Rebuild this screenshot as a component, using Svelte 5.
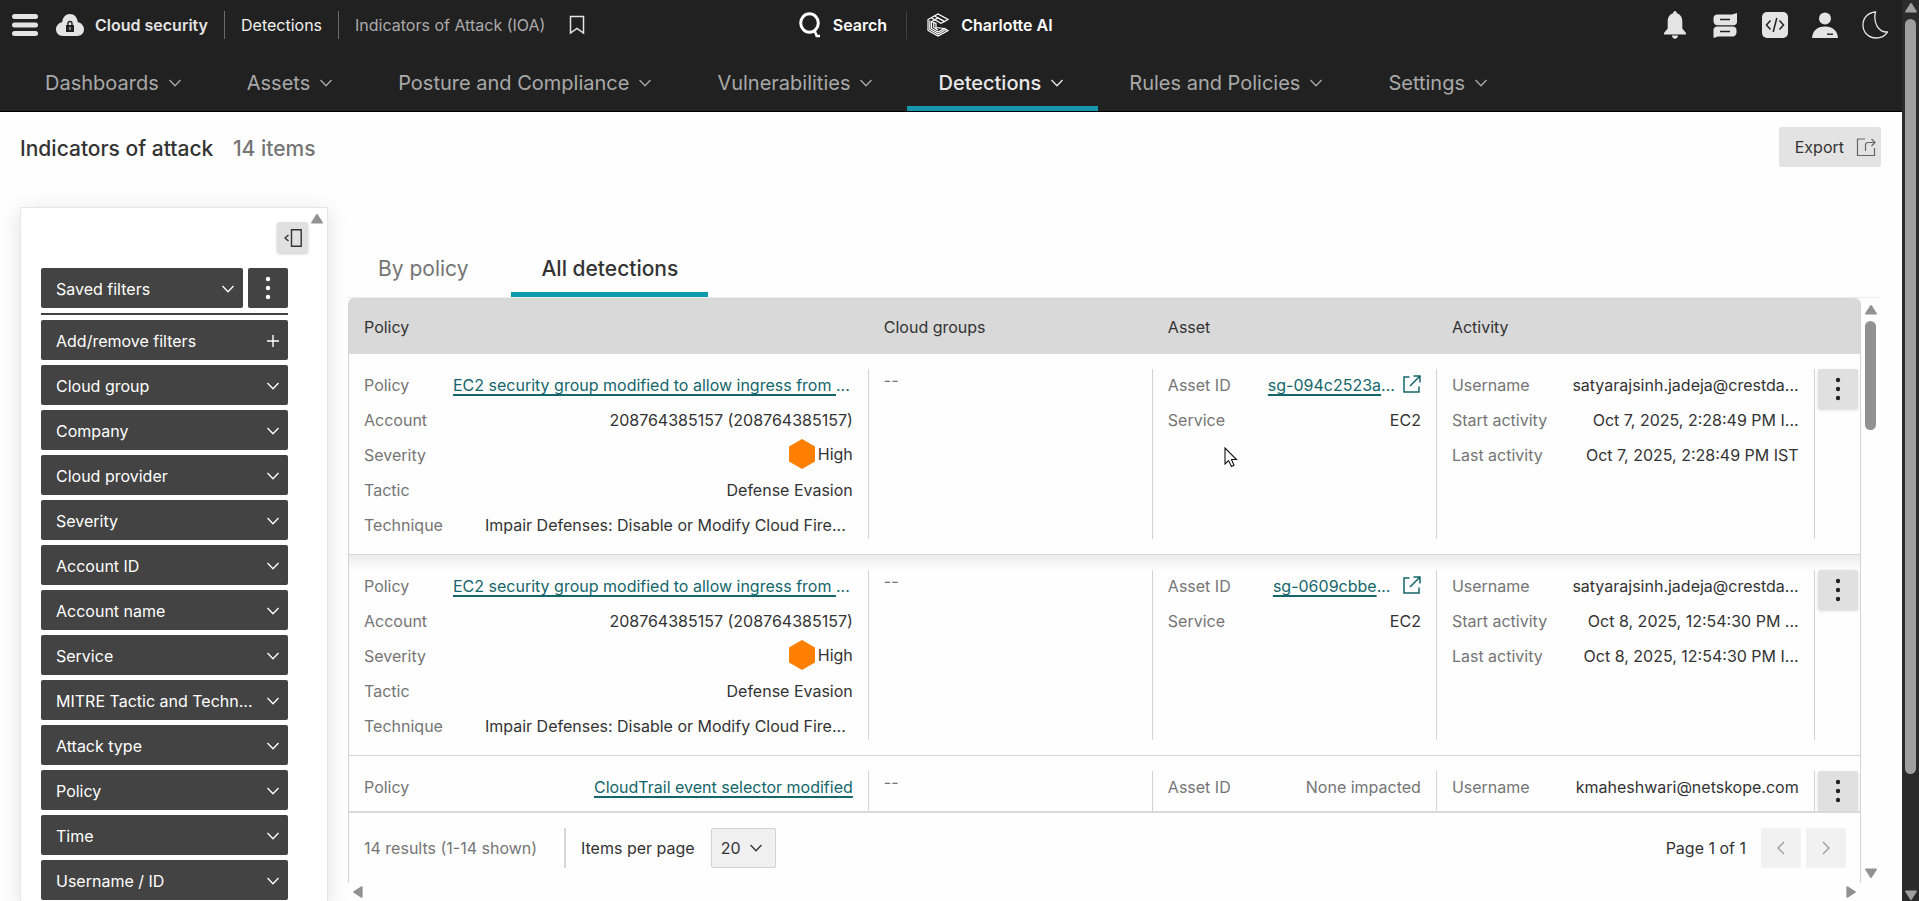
<script>
  const navItems = [
    'Dashboards',
    'Assets',
    'Posture and Compliance',
    'Vulnerabilities',
    'Detections',
    'Rules and Policies',
    'Settings'
  ];

  const filters = [
    'Cloud group',
    'Company',
    'Cloud provider',
    'Severity',
    'Account ID',
    'Account name',
    'Service',
    'MITRE Tactic and Techn...',
    'Attack type',
    'Policy',
    'Time',
    'Username / ID'
  ];

  const detections = [
    {
      policy: 'EC2 security group modified to allow ingress from ',
      cut: true,
      account: '208764385157 (208764385157)',
      severity: 'High',
      tactic: 'Defense Evasion',
      technique: 'Impair Defenses: Disable or Modify Cloud Fire...',
      assetId: 'sg-094c2523a',
      service: 'EC2',
      username: 'satyarajsinh.jadeja@crestda...',
      start: 'Oct 7, 2025, 2:28:49 PM I...',
      last: 'Oct 7, 2025, 2:28:49 PM IST'
    },
    {
      policy: 'EC2 security group modified to allow ingress from ',
      cut: true,
      account: '208764385157 (208764385157)',
      severity: 'High',
      tactic: 'Defense Evasion',
      technique: 'Impair Defenses: Disable or Modify Cloud Fire...',
      assetId: 'sg-0609cbbe',
      service: 'EC2',
      username: 'satyarajsinh.jadeja@crestda...',
      start: 'Oct 8, 2025, 12:54:30 PM ...',
      last: 'Oct 8, 2025, 12:54:30 PM I...'
    },
    {
      policy: 'CloudTrail event selector modified',
      username: 'kmaheshwari@netskope.com'
    }
  ];

  let activeNav = 'Detections';
  let activeTab = 'All detections';
  let hovered = 0;
  let pageSize = '20';
</script>

{#snippet chevron()}
  <svg class="chevron" width="12" height="8" viewBox="0 0 12 8" fill="none" stroke="currentColor" stroke-width="1.3" aria-hidden="true">
    <path d="M.5 1L6 6.800 11.500 1" />
  </svg>
{/snippet}

{#snippet kebab()}
  <svg width="6" height="24" viewBox="0 0 6 24" fill="currentColor" aria-hidden="true">
    <circle cx="3" cy="3" r="2.2" />
    <circle cx="3" cy="12" r="2.2" />
    <circle cx="3" cy="21" r="2.2" />
  </svg>
{/snippet}

{#snippet arrow(dir)}
  <svg class="arrow {dir}" width="12" height="12" viewBox="0 0 12 12" fill="currentColor" aria-hidden="true">
    <path d="M5.2 1.6Q6 .6 6.8 1.6L11.6 9q.8 1.6-.8 1.6H1.2Q-.4 10.6.4 9z" />
  </svg>
{/snippet}

<div class="app">
  <div class="page">
    <header>
      <div class="topbar">
        <div class="crumbs">
          <button class="icon-btn menu" aria-label="Menu">
            <svg width="26" height="24" viewBox="0 0 26 24" fill="currentColor">
              <rect y="1" width="26" height="5" rx="2.5" />
              <rect y="9.5" width="26" height="5" rx="2.5" />
              <rect y="18" width="26" height="5" rx="2.5" />
            </svg>
          </button>
          <svg width="28" height="24" viewBox="0 0 28 24" fill="#e4e4e4" aria-hidden="true">
            <path d="M14 1c-4.200 0-7.500 3.300-7.700 8C2.600 10 0 12.700 0 16.300 0 20.300 3 23 6.800 23h14.400c3.800 0 6.800-2.700 6.800-6.700 0-3.600-2.600-6.300-6.300-7.300C21.500 4.300 18.200 1 14 1z" />
            <path d="M10 12h8v7h-8z" fill="#212121" />
            <path d="M12 12.500v-2a2 2 0 0 1 4 0v2" fill="none" stroke="#212121" stroke-width="1.400" />
            <path d="M14 14v3" stroke="#e4e4e4" stroke-width="1" />
          </svg>
          <strong>Cloud security</strong>
          <span class="sep"></span>
          <a class="crumb" href="#detections">Detections</a>
          <span class="sep"></span>
          <span class="crumb-current">Indicators of Attack (IOA)</span>
          <button class="icon-btn" aria-label="Bookmark">
            <svg width="16" height="20" viewBox="0 0 16 20" fill="none" stroke="currentColor" stroke-width="1.500">
              <path d="M1.500 1.500h13v16.500L8 13.500 1.500 18z" />
            </svg>
          </button>
        </div>
        <div class="center-tools">
          <button class="tool">
            <svg width="22" height="26" viewBox="0 0 22 26" fill="none" stroke="currentColor" stroke-width="3" aria-hidden="true">
              <ellipse cx="10.500" cy="11" rx="8.800" ry="9.300" />
              <path d="M15.500 18.500l2.200 5.500H21" stroke-width="2.500" />
            </svg>
            Search
          </button>
          <span class="sep dim"></span>
          <button class="tool">
            <svg width="22" height="24" viewBox="0 0 22 24" fill="none" stroke="currentColor" stroke-width="1.200" aria-hidden="true">
              <path d="M1 6.500L11 1l10 5.500-3.500 2L11 5 4.500 8.500v7L11 19l6.500-3.500 3.500 2L11 23 1 17.500z" />
              <path d="M4.300 4.700l9.700 5.500 3.500-1.700M7.600 2.900l9.900 5.600M2.800 7.500v9L11 21l8-4.500M4.500 8.500L9 10.500v4l8.500 1M6.800 9.500v5l4.200 2.500" />
            </svg>
            Charlotte AI
          </button>
        </div>
        <div class="user-tools">
          <button class="icon-btn" aria-label="Notifications">
            <svg width="26" height="28" viewBox="-1 0 26 28" fill="currentColor">
              <path d="M12 0c1 0 1.700 1 1.900 2.200 3.300 1 5.400 4 5.400 7.800v7.500L23 22v1.500H1V22l3.700-4.500V10c0-3.800 2.100-6.800 5.400-7.800C10.300 1 11 0 12 0zM9 24.500h6c0 2-1.200 3.200-3 3.200s-3-1.200-3-3.200z" />
            </svg>
          </button>
          <button class="icon-btn" aria-label="Messages">
            <svg width="26" height="28" viewBox="-1 0 26 28">
              <path d="M4.500 3.500H19L24 2v9c0 2-1.500 3.200-3.500 3.200h-16C2 14.200.500 12.500.500 10V7.500c0-2.500 1.500-4 4-4z" fill="currentColor" />
              <path d="M4.500 15.500h15c2.500 0 4 1.500 4 3.500v2.500c0 2.300-1.500 4-4 4H5L.500 27V19c0-2 1.500-3.500 4-3.500z" fill="currentColor" />
              <path d="M7 8.500h10M7 20.500h10" stroke="#212121" stroke-width="1.600" />
            </svg>
          </button>
          <button class="icon-btn" aria-label="API">
            <svg width="26" height="28" viewBox="0 0 26 28">
              <rect y="1" width="26" height="26" rx="5" fill="currentColor" />
              <path d="M8.500 9.500L4.500 14l4 4.500M17.500 9.500l4 4.500-4 4.500M14.800 7l-3.600 14" fill="none" stroke="#212121" stroke-width="1.500" />
            </svg>
          </button>
          <button class="icon-btn" aria-label="Account">
            <svg width="26" height="28" viewBox="0 0 26 28" fill="currentColor">
              <ellipse cx="13" cy="7.500" rx="6" ry="6" />
              <path d="M0 27c.5-7 5-11.500 13-11.500S25.500 20 26 27z" />
              <path d="M15 23.200h6" stroke="#212121" stroke-width="1.400" />
            </svg>
          </button>
          <button class="icon-btn" aria-label="Dark mode">
            <svg width="26" height="28" viewBox="0 0 26 28" fill="none" stroke="currentColor" stroke-width="1.300">
              <path d="M13.500 1C6 1.500 1 7 1 14c0 7.500 5.500 13 13 13 5 0 9-2 11.500-6-9 .5-14.500-9-12-20z" />
            </svg>
          </button>
        </div>
      </div>
      <nav>
        {#each navItems as item}
          <button class="nav-item" class:active={item === activeNav} on:click={() => (activeNav = item)}>
            {item}
            {@render chevron()}
          </button>
        {/each}
      </nav>
    </header>

    <div class="title-row">
      <h1>Indicators of attack <span>14 items</span></h1>
      <button class="export">
        Export
        <svg width="20" height="20" viewBox="0 0 20 20" fill="none" stroke="currentColor" stroke-width="1.200" aria-hidden="true">
          <path d="M9 2H1.500v16.500h17V11M9.500 14V8c0-1.500.8-2.500 2.500-2.500h7M15.500 2l3.500 3.500L15.500 9" />
        </svg>
      </button>
    </div>

    <main>
      <aside>
        <div class="filters">
          <button class="collapse" aria-label="Collapse filters">
            <svg width="18" height="18" viewBox="0 0 18 18" fill="none" stroke="currentColor" stroke-width="1.400">
              <path d="M7.500.800h9.700v16.400H7.500zM4.500 6L1 9l3.500 3" />
            </svg>
          </button>
          <div class="saved">
            <button class="filter">Saved filters {@render chevron()}</button>
            <button class="filter more" aria-label="Saved filter actions">{@render kebab()}</button>
          </div>
          <hr />
          <button class="filter">
            Add/remove filters
            <svg width="12" height="12" viewBox="0 0 12 12" stroke="currentColor" stroke-width="1.400" aria-hidden="true">
              <path d="M6 0v12M0 6h12" />
            </svg>
          </button>
          {#each filters as filter}
            <button class="filter">{filter} {@render chevron()}</button>
          {/each}
        </div>
        <div class="aside-scroll">{@render arrow('up')}</div>
      </aside>

      <section class="content">
        <div class="tabs" role="tablist">
          {#each ['By policy', 'All detections'] as tab}
            <button
              class="tab"
              class:active={tab === activeTab}
              role="tab"
              aria-selected={tab === activeTab}
              on:click={() => (activeTab = tab)}
            >
              {tab}
            </button>
          {/each}
        </div>

        <div class="scroller">
          <div class="panel">
            <div class="rows">
              <table>
                <colgroup>
                  <col class="col-policy" />
                  <col class="col-group" />
                  <col class="col-group" />
                  <col class="col-activity" />
                  <col />
                </colgroup>
                <thead>
                  <tr>
                    <th>Policy</th>
                    <th>Cloud groups</th>
                    <th>Asset</th>
                    <th>Activity</th>
                    <th aria-label="Actions"></th>
                  </tr>
                </thead>
                <tbody>
                  {#each detections as d, i}
                    <tr class:hovered={i === hovered}>
                      <td>
                        <dl>
                          <div>
                            <dt>Policy</dt>
                            <dd class:cut={d.cut}><a href="#policy">{d.policy}</a>{#if d.cut}...{/if}</dd>
                          </div>
                          {#if d.account}
                            <div><dt>Account</dt><dd>{d.account}</dd></div>
                            <div>
                              <dt>Severity</dt>
                              <dd class="severity">
                                <svg width="26" height="30" viewBox="0 0 26 30" fill="#ff8000" aria-hidden="true">
                                  <path d="M13 0l13 7.500v15L13 30 0 22.500v-15z" />
                                </svg>
                                {d.severity}
                              </dd>
                            </div>
                            <div><dt>Tactic</dt><dd>{d.tactic}</dd></div>
                            <div><dt>Technique</dt><dd class="clipped">{d.technique}</dd></div>
                          {/if}
                        </dl>
                      </td>
                      <td><div class="empty">--</div></td>
                      <td>
                        <dl>
                          <div>
                            <dt>Asset ID</dt>
                            {#if d.assetId}
                              <dd class="asset">
                                <span><a href="#asset">{d.assetId}</a>...</span>
                                <svg width="18" height="18" viewBox="0 0 18 18" fill="none" stroke="currentColor" stroke-width="1.500" aria-hidden="true">
                                  <path d="M6.500 2H1v15h15v-5.500M7 11L16.500 1.500M10.500 1H17v6.500" />
                                </svg>
                              </dd>
                            {:else}
                              <dd class="muted">None impacted</dd>
                            {/if}
                          </div>
                          {#if d.service}
                            <div><dt>Service</dt><dd>{d.service}</dd></div>
                          {/if}
                        </dl>
                      </td>
                      <td>
                        <dl>
                          <div><dt>Username</dt><dd>{d.username}</dd></div>
                          {#if d.start}
                            <div><dt>Start activity</dt><dd>{d.start}</dd></div>
                            <div><dt>Last activity</dt><dd>{d.last}</dd></div>
                          {/if}
                        </dl>
                      </td>
                      <td class="actions">
                        <button class="row-menu" aria-label="Row actions">{@render kebab()}</button>
                      </td>
                    </tr>
                  {/each}
                </tbody>
              </table>
            </div>
            <footer>
              <span class="results">14 results (1-14 shown)</span>
              <label for="page-size">Items per page</label>
              <div class="select">
                <select id="page-size" bind:value={pageSize}>
                  <option>20</option>
                  <option>50</option>
                  <option>100</option>
                </select>
                {@render chevron()}
              </div>
              <span class="page-count">Page 1 of 1</span>
              <button class="pager" aria-label="Previous page" disabled>
                <svg width="8" height="14" viewBox="0 0 8 14" fill="none" stroke="currentColor" stroke-width="1.300"><path d="M7 1L1 7l6 6" /></svg>
              </button>
              <button class="pager" aria-label="Next page" disabled>
                <svg width="8" height="14" viewBox="0 0 8 14" fill="none" stroke="currentColor" stroke-width="1.300"><path d="M1 1l6 6-6 6" /></svg>
              </button>
            </footer>
          </div>
          <div class="v-scroll">
            {@render arrow('up')}
            <span class="thumb"></span>
            {@render arrow('down')}
          </div>
          <div class="h-scroll">
            {@render arrow('left')}
            {@render arrow('right')}
          </div>
        </div>
      </section>
    </main>
  </div>

  <div class="page-scroll">
    {@render arrow('up')}
    <span class="thumb"></span>
    {@render arrow('down')}
  </div>

  <svg class="cursor" width="14" height="21" viewBox="0 0 14 21" fill="#fff" stroke="#111" stroke-width="1.100" aria-hidden="true">
    <path d="M1 1v16l3.600-3.400L7.500 19.500l2.500-1.200L7.500 12.500H12.500z" />
  </svg>
</div>

<style>
  :global(body) {
    overflow: hidden;
  }

  .app {
    display: flex;
    height: 100vh;
    overflow: hidden;
    background: #fefefe;
    color: #333;
    font-family: Inter, 'Liberation Sans', sans-serif;
    font-size: 16px;
    line-height: 20px;
  }

  .page {
    flex: 1;
    min-width: 0;
    display: flex;
    flex-direction: column;
  }

  button {
    font: inherit;
    color: inherit;
    border: 0;
    padding: 0;
    background: none;
    cursor: pointer;
    white-space: nowrap;
  }

  svg {
    display: block;
    flex: none;
  }

  /* Header */
  header {
    background: #212121;
    border-bottom: 1px solid #000;
    color: #e4e4e4;
  }

  .topbar {
    display: grid;
    grid-template-columns: 42% 1fr auto;
    align-items: center;
    height: 49px;
  }

  .crumbs,
  .center-tools,
  .user-tools,
  .tool {
    display: flex;
    align-items: center;
    white-space: nowrap;
  }

  .crumbs {
    padding-left: 12px;
  }

  .menu {
    margin-right: 18px;
  }

  strong {
    margin-left: 11px;
    font-weight: 600;
  }

  .sep {
    width: 1px;
    height: 28px;
    margin: 0 16px;
    background: #6a6a6a;
  }

  .sep.dim {
    margin: 0 20px 0 19px;
    background: #404040;
  }

  .crumb {
    color: #f0f0f0;
    text-decoration: none;
  }

  .crumb-current {
    margin-right: 24px;
    color: #ababab;
  }

  .tool {
    gap: 12px;
    color: #fff;
    font-weight: 600;
  }

  .user-tools {
    gap: 24px;
    padding-right: 14px;
  }

  nav {
    display: flex;
    height: 62px;
    padding-left: 14px;
  }

  .nav-item {
    display: flex;
    align-items: center;
    gap: 10px;
    padding: 10px 35px 0 31px;
    color: #a9a9a9;
    font-size: 20px;
    border-bottom: 5px solid transparent;
  }

  .nav-item.active {
    color: #e8e8e8;
    font-weight: 500;
    border-color: #1797ae;
  }

  /* Title */
  .title-row {
    display: flex;
    align-items: center;
    justify-content: space-between;
    padding: 15px 21px 40px 20px;
  }

  h1 {
    margin: 0;
    padding-top: 3px;
    font-size: 21px;
    line-height: 24px;
    font-weight: 500;
  }

  h1 span {
    margin-left: 14px;
    color: #757575;
  }

  .export {
    display: flex;
    align-items: center;
    gap: 12px;
    height: 40px;
    padding: 0 5px 0 16px;
    background: #e3e3e3;
    border-radius: 2px;
  }

  .export svg {
    color: #666;
  }

  main {
    flex: 1;
    min-height: 0;
    display: flex;
    gap: 20px;
    padding-left: 20px;
  }

  /* Filters */
  aside {
    display: flex;
    width: 308px;
    box-sizing: border-box;
    flex: none;
    background: #fff;
    border: 1px solid #e6e6e6;
    border-bottom: 0;
    box-shadow: 0 4px 20px rgba(0, 0, 0, 0.12);
  }

  .filters {
    flex: 1;
    min-width: 0;
    display: flex;
    flex-direction: column;
    gap: 5px;
    padding: 14px 0 0 20px;
  }

  .collapse {
    display: grid;
    place-items: center;
    align-self: flex-end;
    width: 31px;
    height: 31px;
    margin: 0 -20px 10px 0;
    background: #e0e0e0;
    border-radius: 3px;
    box-shadow: 0 1px 3px rgba(0, 0, 0, 0.2);
  }

  .saved {
    display: flex;
    gap: 5px;
  }

  .saved .filter {
    flex: 1;
  }

  .saved .more {
    flex: 0 0 40px;
    justify-content: center;
    padding: 0;
  }

  hr {
    width: 100%;
    height: 2px;
    margin: 0;
    border: 0;
    background: #434343;
  }

  .filter {
    display: flex;
    align-items: center;
    justify-content: space-between;
    flex: none;
    height: 40px;
    padding: 2px 9px 0 15px;
    color: #fff;
    background: #434343;
    border-radius: 2px;
  }

  .aside-scroll {
    width: 12px;
    padding: 5px 4px 0 23px;
    color: #919191;
  }

  /* Tabs */
  .content {
    flex: 1;
    min-width: 0;
    display: flex;
    flex-direction: column;
    padding: 32px 22px 0 0;
  }

  .tabs {
    display: flex;
    gap: 13px;
    flex: none;
    height: 58px;
    border-bottom: 1px solid #ececec;
  }

  .tab {
    padding: 6px 30px 0;
    color: #757575;
    font-size: 21px;
    border-bottom: 5px solid transparent;
  }

  .tab.active {
    color: #333;
    font-weight: 500;
    border-color: #0d9bb0;
  }

  /* Detections table */
  .scroller {
    flex: 1;
    min-height: 0;
    display: grid;
    grid-template-columns: 1fr 19px;
    grid-template-rows: 1fr 18px;
  }

  .panel {
    min-width: 0;
    min-height: 0;
    display: flex;
    flex-direction: column;
    border: 1px solid #d3d3d3;
    border-width: 0 1px;
    border-radius: 6px 6px 0 0;
    overflow: hidden;
  }

  .rows {
    flex: 1;
    min-height: 0;
    overflow: hidden;
  }

  table {
    width: 100%;
    table-layout: fixed;
    border-collapse: separate;
    border-spacing: 0;
  }

  .col-policy {
    width: 34.4%;
  }

  .col-group {
    width: 18.8%;
  }

  .col-activity {
    width: 25%;
  }

  th {
    height: 54px;
    padding: 2px 15px 0;
    background: #d9d9d9;
    font-weight: 400;
    text-align: left;
  }

  td {
    padding: 15px 0;
    vertical-align: top;
    border-bottom: 1px solid #d6d6d6;
  }

  tr.hovered + tr td {
    background: linear-gradient(#ececec, #fefefe 16px);
  }

  dl,
  .empty {
    display: flex;
    flex-direction: column;
    gap: 5px;
    min-height: 170px;
    box-sizing: border-box;
    margin: 0;
    padding: 0 15px;
    border-right: 1px solid #d3d3d3;
  }

  dl div {
    display: flex;
    justify-content: space-between;
    height: 30px;
    line-height: 32px;
    white-space: nowrap;
  }

  dt,
  .muted {
    color: #757575;
  }

  dd {
    margin: 0;
  }

  dd a {
    color: #14666b;
    text-underline-offset: 3px;
    text-decoration-thickness: 2px;
    text-decoration-skip-ink: none;
    white-space: pre;
  }

  .cut,
  .asset {
    color: #14666b;
  }

  .cut {
    padding-right: 3px;
  }

  .clipped {
    padding-right: 7px;
  }

  .severity {
    display: flex;
    align-items: center;
    gap: 3px;
  }

  .asset {
    display: flex;
    gap: 8px;
  }

  .asset span {
    min-width: 122px;
  }

  .asset svg {
    margin-top: 6px;
  }

  .empty {
    color: #757575;
    line-height: 22px;
  }

  .actions {
    padding-left: 3px;
  }

  .row-menu {
    display: grid;
    place-items: center;
    width: 40px;
    height: 40px;
    color: #222;
    background: #e0e0e0;
    border-radius: 2px;
    box-shadow: 0 1px 3px rgba(0, 0, 0, 0.15);
  }

  /* Pagination */
  footer {
    display: flex;
    align-items: center;
    flex: none;
    height: 72px;
    box-sizing: border-box;
    padding: 0 14px 0 15px;
    border-top: 2px solid #d9d9d9;
    white-space: nowrap;
  }

  .results {
    min-width: 186px;
    padding-right: 14px;
    margin-right: 15px;
    box-sizing: content-box;
    border-right: 2px solid #d6d6d6;
    color: #757575;
    line-height: 40px;
  }

  .select {
    display: grid;
    align-items: center;
    margin-left: 16px;
  }

  .select :global(.chevron) {
    grid-area: 1 / 1;
    justify-self: end;
    margin-right: 14px;
    pointer-events: none;
  }

  select {
    grid-area: 1 / 1;
    appearance: none;
    height: 40px;
    width: 65px;
    padding: 0 9px;
    font: inherit;
    color: #333;
    background: #f0f0f0;
    border: 1px solid #d3d3d3;
    border-radius: 2px;
  }

  .page-count {
    margin-left: auto;
    margin-right: 10px;
  }

  .pager {
    display: grid;
    place-items: center;
    width: 40px;
    height: 40px;
    margin-left: 5px;
    color: #999;
    background: #f1f1f1;
    border-radius: 2px;
  }

  /* Scrollbars */
  .arrow.down {
    transform: rotate(180deg);
  }

  .arrow.left {
    transform: rotate(-90deg);
  }

  .arrow.right {
    transform: rotate(90deg);
  }

  .v-scroll {
    display: flex;
    flex-direction: column;
    align-items: center;
    padding: 6px 0 4px;
    color: #919191;
  }

  .v-scroll .thumb {
    width: 11px;
    height: 19%;
    margin: 5px 0 auto;
    background: #919191;
    border-radius: 6px;
  }

  .h-scroll {
    display: flex;
    justify-content: space-between;
    align-items: center;
    padding: 0 4px;
    color: #919191;
  }

  .page-scroll {
    display: flex;
    flex-direction: column;
    align-items: center;
    flex: none;
    width: 17px;
    padding-top: 2px;
    color: #9f9f9f;
    background: #2b2b2b;
  }

  .page-scroll .thumb {
    width: 11px;
    height: 84%;
    margin: 5px 0 auto;
    background: #9f9f9f;
    border-radius: 6px;
  }

  .cursor {
    position: fixed;
    left: 1224px;
    top: 447px;
  }
</style>
